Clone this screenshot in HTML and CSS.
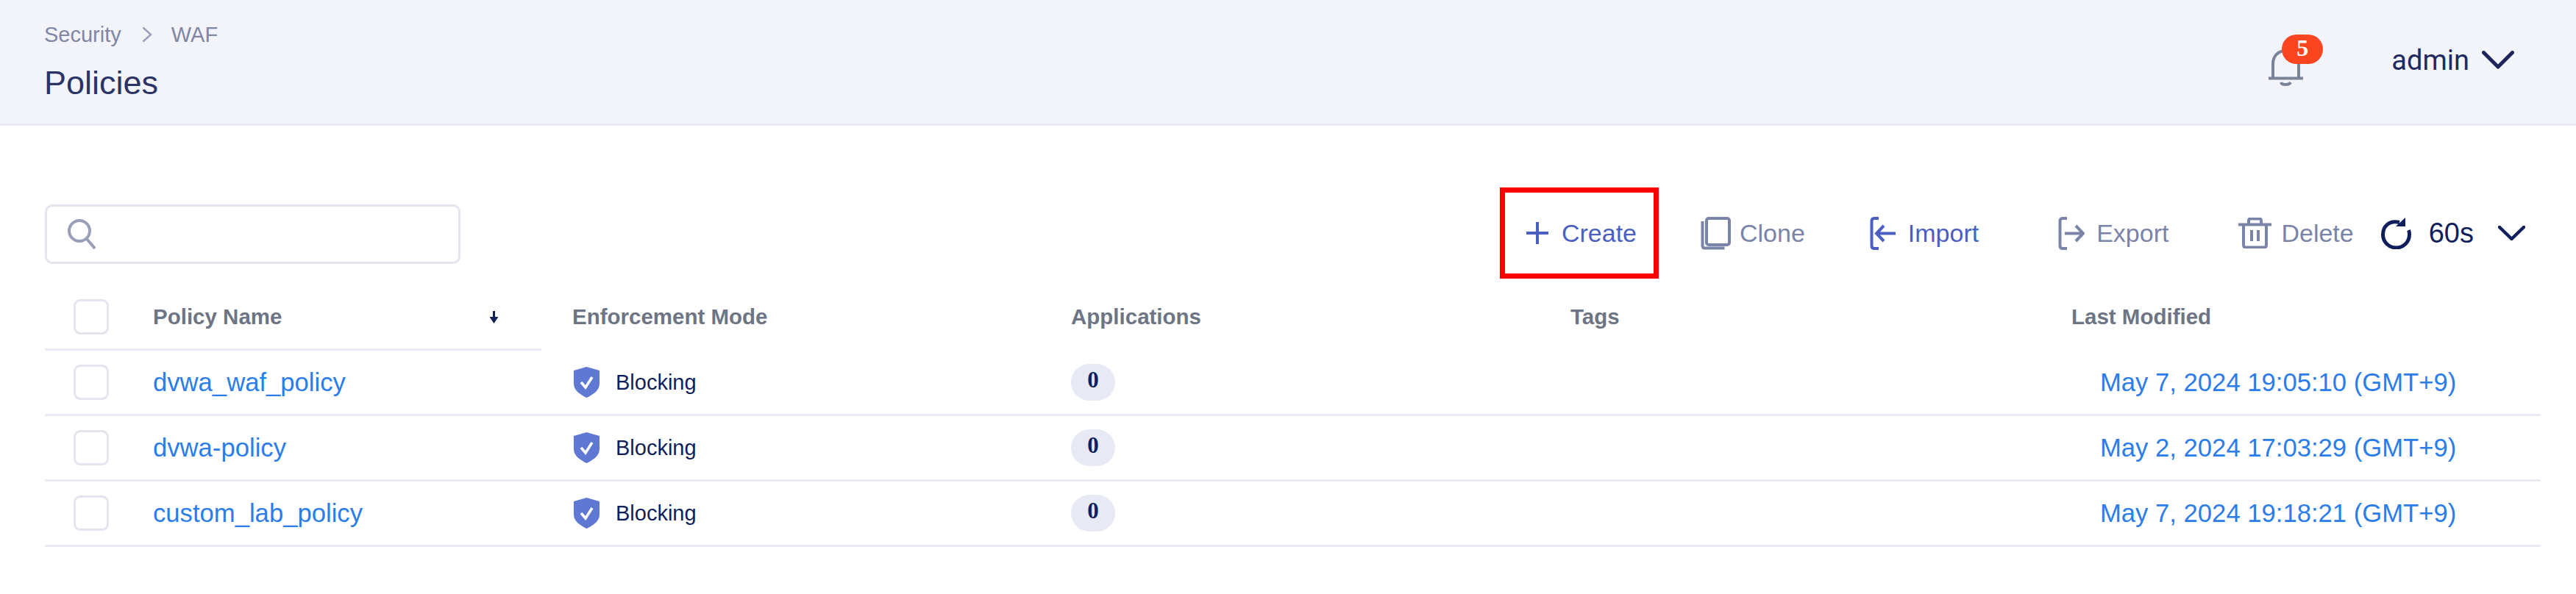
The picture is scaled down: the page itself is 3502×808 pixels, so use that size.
FILE: index.html
```html
<!DOCTYPE html>
<html lang="en">
<head>
<meta charset="utf-8">
<title>Policies</title>
<link rel="stylesheet" href="styles.css">
</head>
<body>
<header class="topbar">
  <div class="titles">
    <div class="crumbs"><span>Security</span>
      <svg class="crumb-sep" viewBox="0 0 14 22"><path d="M1.500 1.500 12 11 1.500 20.500"/></svg>
      <span>WAF</span></div>
    <h1>Policies</h1>
  </div>
  <div class="account">
    <div class="bell">
      <svg class="bell-icon" viewBox="0 0 49 54"><path d="M7 43V24C7 13 14 6 25 6s17 7 17 18v19"/><path d="M1 43.500h47"/><path d="M18 49c1 4 11 4 13 0"/></svg>
      <span class="badge">5</span>
    </div>
    <span class="user">admin</span>
    <svg class="chev-user" viewBox="0 0 44 25"><path d="M2.500 2.500 22 22 41.500 2.500"/></svg>
  </div>
</header>
<main class="content">
  <div class="toolbar">
    <div class="search">
      <svg class="search-icon" viewBox="0 0 38 41"><circle cx="16" cy="16" r="14"/><path d="m26 27 11 13"/></svg>
    </div>
    <div class="actions">
      <button class="action create">
        <svg class="ico ico-plus" viewBox="0 0 30 30"><path d="M15 0v30M0 15h30"/></svg>Create</button>
      <button class="action off clone">
        <svg class="ico ico-clone" viewBox="0 0 41 45"><rect x="8" y="2" width="31" height="36" rx="3"/><path d="M2.500 6v33c0 2 1 3.500 3 3.500h27"/></svg>Clone</button>
      <button class="action import">
        <svg class="ico ico-io" viewBox="0 0 36 45"><path d="M12 2H6C3.500 2 2.500 3.500 2.500 6v33c0 2.500 1 4 3.500 4h6"/><path d="M35 22.500H10M19 12 9 22.500 19 33"/></svg>Import</button>
      <button class="action off export">
        <svg class="ico ico-io" viewBox="0 0 36 45"><path d="M12 2H6C3.500 2 2.500 3.500 2.500 6v33c0 2.500 1 4 3.500 4h6"/><path d="M9 22.500h25M24 12l10 10.500L24 33"/></svg>Export</button>
      <button class="action off delete">
        <svg class="ico ico-trash" viewBox="0 0 45 42"><path d="M0 9.500h45M14 8V4c0-1.500 1-2.500 2.500-2.500h12C30 1.500 31 2.500 31 4v4M7 10v27c0 2 1 3.500 3 3.500h25c2 0 3-1.500 3-3.500V10M18 17v15M27 17v15"/></svg>Delete</button>
      <div class="refresh">
        <svg class="ico-refresh" viewBox="0 0 41 43"><path d="M25 6.500C11 3 2.500 12 2.500 23c0 10 8 18 18 18s18-8 18-18c0-2-.5-5-1-6"/><path class="fill" d="M33 0v12H20z"/></svg>
        <span class="rate">60s</span>
        <svg class="chev-rate" viewBox="0 0 37 20"><path d="M2 2 18.500 18 35 2"/></svg>
      </div>
    </div>
  </div>
  <div class="table">
    <div class="row head">
      <div class="cell sel"><span class="check"></span></div>
      <div class="cell name">Policy Name
        <svg class="sort" viewBox="0 0 15 17"><path d="M7.500 0v11" /><path class="fill" d="M1.500 8h12l-6 9z"/></svg>
      </div>
      <div class="cell mode">Enforcement Mode</div>
      <div class="cell">Applications</div>
      <div class="cell">Tags</div>
      <div class="cell">Last Modified</div>
    </div>
    <div class="row">
      <div class="cell sel"><span class="check"></span></div>
      <div class="cell name"><a class="link">dvwa_waf_policy</a></div>
      <div class="cell mode"><svg class="shield" viewBox="0 0 35 42"><path class="fill" d="M17.500 0 35 5v18c0 9-9 15-17.500 19C9 38 0 32 0 23V5z"/><path class="tick" d="m10 21 6 7 9-14"/></svg>Blocking</div>
      <div class="cell"><span class="pill">0</span></div>
      <div class="cell"></div>
      <div class="cell"><a class="link date">May 7, 2024 19:05:10 (GMT+9)</a></div>
    </div>
    <div class="row">
      <div class="cell sel"><span class="check"></span></div>
      <div class="cell name"><a class="link">dvwa-policy</a></div>
      <div class="cell mode"><svg class="shield" viewBox="0 0 35 42"><path class="fill" d="M17.500 0 35 5v18c0 9-9 15-17.500 19C9 38 0 32 0 23V5z"/><path class="tick" d="m10 21 6 7 9-14"/></svg>Blocking</div>
      <div class="cell"><span class="pill">0</span></div>
      <div class="cell"></div>
      <div class="cell"><a class="link date">May 2, 2024 17:03:29 (GMT+9)</a></div>
    </div>
    <div class="row">
      <div class="cell sel"><span class="check"></span></div>
      <div class="cell name"><a class="link">custom_lab_policy</a></div>
      <div class="cell mode"><svg class="shield" viewBox="0 0 35 42"><path class="fill" d="M17.500 0 35 5v18c0 9-9 15-17.500 19C9 38 0 32 0 23V5z"/><path class="tick" d="m10 21 6 7 9-14"/></svg>Blocking</div>
      <div class="cell"><span class="pill">0</span></div>
      <div class="cell"></div>
      <div class="cell"><a class="link date">May 7, 2024 19:18:21 (GMT+9)</a></div>
    </div>
  </div>
</main>
</body>
</html>
```
FILE: styles.css
```css
* { box-sizing: border-box; }
html, body { margin: 0; background: #fff; }
body { font-family: "Liberation Sans", Arial, sans-serif; color: #1b2559; overflow: hidden; }
svg { fill: none; stroke: currentColor; flex: none; display: block; }
svg .fill { fill: currentColor; stroke: none; }

.topbar { height: 171px; background: #f3f4f9; border-bottom: 3px solid #e9ebf3; display: flex; justify-content: space-between; padding: 0 84px 0 60px; }
.titles { padding-top: 29px; }
.crumbs { display: flex; align-items: center; height: 36px; font-size: 29px; color: #7f86a6; }
.crumb-sep { width: 14px; height: 22px; margin: 0 26px 0 28px; stroke: #9ba1bb; stroke-width: 2.500; }
h1 { margin: 22px 0 0; font-size: 45px; line-height: 52px; font-weight: 400; color: #2a3566; }
.account { display: flex; align-items: flex-start; padding-top: 63px; }
.bell { position: relative; width: 49px; height: 54px; }
.bell-icon { width: 49px; height: 54px; color: #7a8398; stroke-width: 4; }
.badge { position: absolute; left: 19px; top: -16px; width: 56px; height: 40px; border-radius: 20px; background: #fb4520; color: #fff; font: 700 32px/36px "Liberation Serif", serif; text-align: center; }
.user { margin-left: 119px; font-family: Roboto, "Liberation Sans", sans-serif; font-size: 38px; line-height: 40px; color: #1f2a5e; margin-top: -1px; }
.chev-user { width: 44px; height: 25px; margin: 6px 0 0 17px; color: #1b2559; stroke-width: 5; stroke-linecap: round; stroke-linejoin: round; }

.content { padding: 84px 48px 0 61px; }
.toolbar { display: flex; justify-content: space-between; align-items: center; height: 124px; }
.search { width: 565px; height: 81px; margin-top: 3px; border: 3px solid #e3e5ef; border-radius: 10px; display: flex; align-items: center; padding-left: 28px; }
.search-icon { width: 38px; height: 41px; color: #9a9fb8; stroke-width: 4; }
.actions { display: flex; align-items: center; height: 124px; margin-right: 21px; }
.action { display: flex; align-items: center; border: 0; background: none; padding: 0; font: 400 34px/40px "Liberation Sans", Arial, sans-serif; color: #4a5fc1; }
.action.off { color: #7a84a8; }
.create { width: 216px; height: 124px; border: 7px solid #ff0000; padding-left: 29px; margin-right: 57px; }
.clone { margin-right: 88px; }
.import { margin-right: 108px; }
.export { margin-right: 95px; }
.delete { margin-right: 37px; }
.ico { margin-right: 16px; stroke-width: 4; }
.ico-plus { width: 30px; height: 30px; stroke-width: 4; margin-right: 18px; }
.ico-clone { width: 41px; height: 45px; margin-right: 12px; }
.ico-io { width: 36px; height: 45px; }
.ico-trash { width: 45px; height: 42px; margin-right: 13px; }
.refresh { display: flex; align-items: center; color: #101f5c; }
.ico-refresh { width: 41px; height: 43px; stroke-width: 5; }
.rate { margin-left: 24px; font-size: 38px; line-height: 40px; }
.chev-rate { width: 37px; height: 20px; margin-left: 33px; stroke-width: 4.500; stroke-linecap: round; stroke-linejoin: round; }

.table { margin-top: 9px; }
.row { display: grid; grid-template-columns: 147px 528px 720px 679px 681px 638px; height: 89px; }
.cell { display: flex; align-items: center; font-size: 29px; color: #101f5c; border-bottom: 3px solid #e9ebf3; }
.head .cell { font-weight: 700; font-size: 29.500px; color: #6d7585; border-bottom-color: transparent; }
.head .sel, .head .name { border-bottom-color: #e9ebf3; }
.sel { padding-left: 39px; }
.check { width: 48px; height: 48px; border: 3px solid #e3e5ef; border-radius: 9px; }
.name { justify-content: space-between; padding-right: 57px; }
.mode { padding-left: 42px; }
.sort { width: 15px; height: 17px; color: #101f5c; stroke-width: 3; }
.link { color: #2b7de9; font-size: 34.650px; }
.date { margin-left: 39px; }
.shield { width: 35px; height: 42px; margin: 0 22px 0 2px; color: #5f78d4; }
.tick { stroke: #fff; stroke-width: 3.500; }
.pill { width: 60px; height: 50px; border-radius: 25px; background: #e7e9f4; text-align: center; font: 700 31px/44px "Liberation Serif", serif; color: #101f5c; }
```
